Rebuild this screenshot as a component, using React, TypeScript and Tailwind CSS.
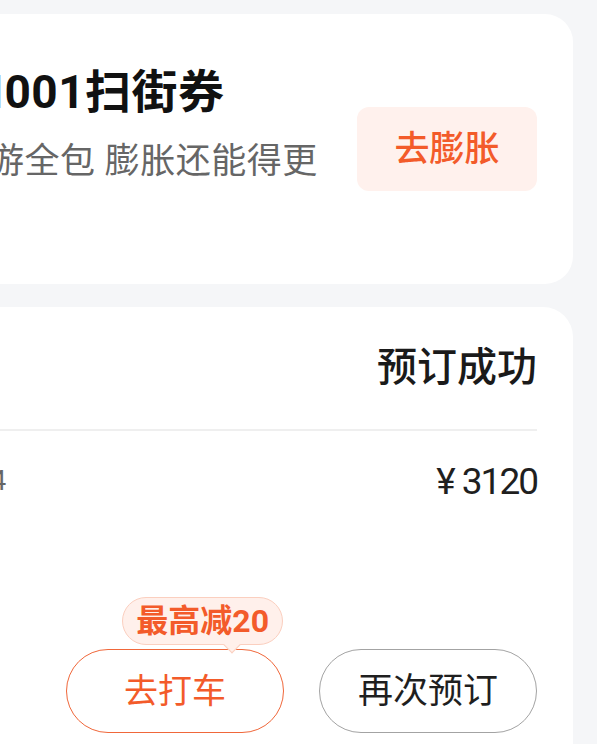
import React from "react";

const font = { fontFamily: 'Roboto, "Noto Sans CJK SC", sans-serif' };

export default function App() {
  return (
    <div
      className="w-[597px] h-[744px] overflow-hidden bg-[#f5f6f8] pt-[14px] pr-[24px] flex flex-col gap-[23px]"
      style={font}
    >
      {/* Coupon card */}
      <div className="h-[270px] shrink-0 bg-white rounded-r-[28px] flex items-center justify-between pr-[36px] overflow-hidden">
        <div className="self-start pt-[50px] flex flex-col">
          <div className="text-[46px] leading-[56px] font-bold text-[#111] whitespace-nowrap -ml-[18px] tracking-[0.5px]">
            <span className="tracking-[-4px]">1</span>001扫街券
          </div>
          <div className="mt-[18px] text-[35px] leading-[48px] text-[#666] whitespace-nowrap -ml-[11px] tracking-[0.5px]">
            游全包 膨胀还能得更
          </div>
        </div>
        <button className="w-[180px] h-[84px] rounded-[12px] bg-[#fff1ed] text-[#f35b2a] text-[35px] font-medium leading-none flex items-center justify-center">
          去膨胀
        </button>
      </div>

      {/* Order card */}
      <div className="flex-1 bg-white rounded-tr-[30px] pr-[36px] pt-[37px] flex flex-col overflow-hidden">
        <div className="text-right text-[40px] leading-[48px] font-medium text-[#1a1a1a]">
          预订成功
        </div>
        <div className="mt-[37px] h-[2px] bg-[#efefef]" />
        <div className="mt-[26px] flex items-center justify-between h-[48px]">
          <span className="text-[27px] text-[#666] -ml-[9px] leading-none">4</span>
          <span className="text-[37px] text-[#1f1f1f] leading-none tracking-[-2px] flex items-center">
            <span className="mr-[8px]">¥</span>3120
          </span>
        </div>
        <div className="mt-[144px] flex justify-end gap-[35px]">
          <div className="relative">
            <div className="absolute right-[1px] bottom-[88px] h-[48px] px-[13px] rounded-full bg-[#fff0eb] border border-[#fbcfbf] flex items-center">
              <span className="text-[32px] font-bold text-[#f35b2a] leading-none whitespace-nowrap">
                最高减20
              </span>
              <span className="absolute left-[103px] -bottom-[7px] w-[12px] h-[12px] rotate-45 bg-[#fff0eb] border-r border-b border-[#fbcfbf]" />
            </div>
            <button className="w-[218px] h-[84px] rounded-full border border-[#f0673a] text-[#f35b2a] text-[34px] leading-none flex items-center justify-center">
              去打车
            </button>
          </div>
          <button className="w-[218px] h-[84px] rounded-full border border-[#a3a3a3] text-[#1f1f1f] text-[35px] leading-none flex items-center justify-center">
            再次预订
          </button>
        </div>
      </div>
    </div>
  );
}
